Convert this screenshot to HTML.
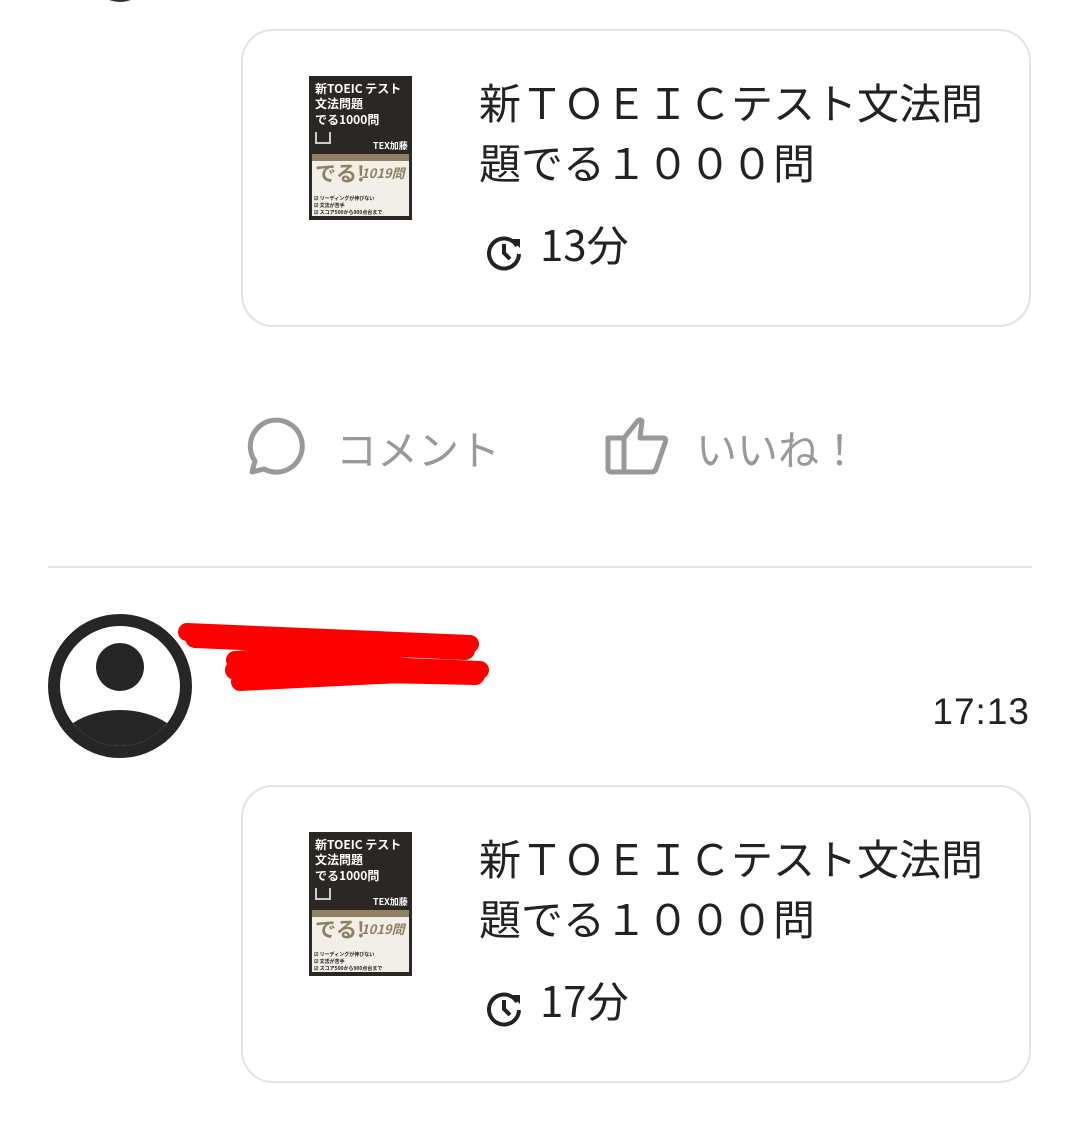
<!DOCTYPE html>
<html><head><meta charset="utf-8"><style>
*{margin:0;padding:0;box-sizing:border-box}
body{width:1080px;height:1141px;background:#fff;position:relative;overflow:hidden;font-family:"Liberation Sans","Noto Sans CJK JP",sans-serif;color:#222}
.abs{position:absolute}
.card{position:absolute;left:241px;width:790px;height:298px;border:2px solid #e3e3e3;border-radius:32px;background:#fff}
.title{position:absolute;left:236px;top:41px;font-size:42px;line-height:60px;color:#222;white-space:nowrap;font-family:"Noto Sans CJK JP",sans-serif}
.dur{position:absolute;left:297px;top:188px;font-size:42px;line-height:50px;color:#222;font-family:"Noto Sans CJK JP",sans-serif}
.clock{position:absolute;left:243px;top:202px}
.book{position:absolute;left:66px;top:45px;width:103px;height:144px;background:#2b2725;overflow:hidden;font-family:"Noto Sans CJK JP",sans-serif;font-weight:bold}
.book .t{position:absolute;left:6px;color:#fff;font-size:12px;line-height:15px;white-space:nowrap}
.book .low{position:absolute;left:3px;top:82px;width:97px;height:58px;background:#f2efe8}
.book .band{position:absolute;left:3px;top:78px;width:97px;height:7px;background:#8f8062}
.book .big{position:absolute;left:6px;top:85px;font-size:21px;line-height:24px;color:#8f8062}
.book .n{position:absolute;left:52px;top:90px;font-size:13px;line-height:14px;color:#8f8062;font-style:italic}
.book .l{position:absolute;left:5px;font-size:5px;line-height:6px;color:#222;white-space:nowrap}
</style></head><body>

<div class="abs" style="left:98px;top:-30px;width:44px;height:32px;border-radius:50%;border-bottom:3px solid #333"></div>

<!-- card 1 -->
<div class="card" style="top:29px">
  <div class="book">
    <div class="t" style="top:5px">新TOEIC テスト</div>
    <div class="t" style="top:20px">文法問題</div>
    <div class="t" style="top:36px">でる1000問</div>
    <div class="t" style="top:62px;left:64px;font-size:9px">TEX加藤</div>
    <div class="abs" style="left:6px;top:56px;width:16px;height:12px;border:2px solid #ccc;border-top:none"></div>
    <div class="low"></div><div class="band"></div>
    <div class="big">でる!</div><div class="n">1019問</div>
    <div class="l" style="top:120px">☑ リーディングが伸びない</div>
    <div class="l" style="top:127px">☑ 文法が苦手</div>
    <div class="l" style="top:134px">☑ スコア500から900点台まで</div>
  </div>
  <div class="title">新ＴＯＥＩＣテスト文法問<br>題でる１０００問</div>
  <svg class="clock" width="38" height="38" viewBox="0 0 38 38"><path d="M31 13 A15 15 0 1 0 33 21" fill="none" stroke="#222" stroke-width="4"/><path d="M25 6 L34 6 L34 15 Z" fill="#222"/><path d="M18 11 V20 L24 26" fill="none" stroke="#222" stroke-width="4"/></svg>
  <div class="dur">13分</div>
</div>

<!-- actions -->
<svg class="abs" style="left:243px;top:416px" width="64" height="62" viewBox="0 0 64 62"><path d="M9 56 L12 45 A26 26 0 1 1 21 53 Z" fill="none" stroke="#999" stroke-width="5" stroke-linejoin="round"/></svg>
<div class="abs" style="left:336px;top:419px;font-size:41px;line-height:56px;color:#999;font-family:'Noto Sans CJK JP',sans-serif">コメント</div>
<svg class="abs" style="left:604px;top:414px" width="66" height="62" viewBox="0 0 66 62"><path d="M4 24 H20 V58 H7 A3 3 0 0 1 4 55 Z M20 24 L32 9 Q35 4 38 7 L36 24 H59 Q63 24 61 29 L52 55 Q51 58 47 58 H20" fill="none" stroke="#999" stroke-width="5" stroke-linejoin="round"/></svg>
<div class="abs" style="left:696px;top:419px;font-size:41px;line-height:56px;color:#999;font-family:'Noto Sans CJK JP',sans-serif">いいね！</div>

<div class="abs" style="left:48px;top:566px;width:984px;height:2px;background:#e6e6e6"></div>

<!-- avatar -->
<svg class="abs" style="left:48px;top:614px" width="144" height="144" viewBox="0 0 144 144">
<defs><clipPath id="c"><circle cx="72" cy="72" r="60"/></clipPath></defs>
<circle cx="72" cy="72" r="66" fill="#fff" stroke="#262626" stroke-width="12"/>
<circle cx="72" cy="53" r="24" fill="#262626"/>
<ellipse cx="72" cy="140" rx="66" ry="44" fill="#262626" clip-path="url(#c)"/>
</svg>
<div class="abs" style="left:245px;top:622px;font-size:28px;color:#222">Y</div>
<svg class="abs" style="left:175px;top:620px" width="320" height="75" viewBox="0 0 320 75">
<path d="M12 12 L295 24 L60 40 L305 50 L65 62" fill="none" stroke="#f00" stroke-width="18" stroke-linecap="round" stroke-linejoin="round"/>
<path d="M20 18 L290 30 M60 50 L300 55" stroke="#f00" stroke-width="20" stroke-linecap="round"/>
</svg>
<div class="abs" style="right:50px;top:690px;font-size:37px;line-height:44px;color:#222;letter-spacing:1px">17:13</div>

<!-- card 2 -->
<div class="card" style="top:785px">
  <div class="book">
    <div class="t" style="top:5px">新TOEIC テスト</div>
    <div class="t" style="top:20px">文法問題</div>
    <div class="t" style="top:36px">でる1000問</div>
    <div class="t" style="top:62px;left:64px;font-size:9px">TEX加藤</div>
    <div class="abs" style="left:6px;top:56px;width:16px;height:12px;border:2px solid #ccc;border-top:none"></div>
    <div class="low"></div><div class="band"></div>
    <div class="big">でる!</div><div class="n">1019問</div>
    <div class="l" style="top:120px">☑ リーディングが伸びない</div>
    <div class="l" style="top:127px">☑ 文法が苦手</div>
    <div class="l" style="top:134px">☑ スコア500から900点台まで</div>
  </div>
  <div class="title">新ＴＯＥＩＣテスト文法問<br>題でる１０００問</div>
  <svg class="clock" width="38" height="38" viewBox="0 0 38 38"><path d="M31 13 A15 15 0 1 0 33 21" fill="none" stroke="#222" stroke-width="4"/><path d="M25 6 L34 6 L34 15 Z" fill="#222"/><path d="M18 11 V20 L24 26" fill="none" stroke="#222" stroke-width="4"/></svg>
  <div class="dur">17分</div>
</div>
</body></html>
